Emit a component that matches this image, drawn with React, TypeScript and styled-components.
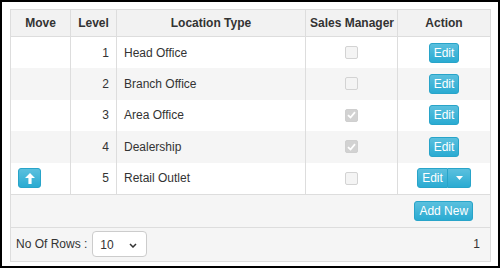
import React from "react"
import styled, { createGlobalStyle } from "styled-components"

type Row = { level: number; name: string; sales: boolean }

const rows: Row[] = [
  { level: 1, name: "Head Office", sales: false },
  { level: 2, name: "Branch Office", sales: false },
  { level: 3, name: "Area Office", sales: true },
  { level: 4, name: "Dealership", sales: true },
  { level: 5, name: "Retail Outlet", sales: false },
]

const GlobalStyle = createGlobalStyle`
  html, body {
    margin: 0;
    padding: 0;
    background: #fff;
  }
  body {
    font-family: "Liberation Sans", Arial, sans-serif;
    font-size: 12px;
    color: #333;
  }
`

export default function App() {
  return (
    <>
      <GlobalStyle />
      <S.Frame>
        <S.Table>
          <colgroup>
            <col style={{ width: 60 }} />
            <col style={{ width: 46 }} />
            <col style={{ width: 189 }} />
            <col style={{ width: 92 }} />
            <col />
          </colgroup>
          <thead>
            <tr>
              <S.Th>Move</S.Th>
              <S.Th>Level</S.Th>
              <S.Th>Location Type</S.Th>
              <S.Th>Sales Manager</S.Th>
              <S.Th>Action</S.Th>
            </tr>
          </thead>
          <tbody>
            {rows.map((r, i) => {
              const last = i === rows.length - 1
              return (
                <S.Tr key={r.level} striped={i % 2 === 1}>
                  <S.Td align="left">
                    {last && (
                      <S.IconButton>
                        <svg width="10" height="11" viewBox="0 0 10 11">
                          <path d="M5 0 L10 5 L6.6 5 L6.6 11 L3.4 11 L3.4 5 L0 5 Z" fill="#fff" />
                        </svg>
                      </S.IconButton>
                    )}
                  </S.Td>
                  <S.Td align="right">{r.level}</S.Td>
                  <S.Td align="left">{r.name}</S.Td>
                  <S.Td align="center">
                    <S.Check checked={r.sales}>
                      {r.sales && (
                        <svg width="9" height="8" viewBox="0 0 9 8">
                          <path d="M1 4.2 L3.5 6.5 L8 1.2" stroke="#fff" strokeWidth="1.8" fill="none" />
                        </svg>
                      )}
                    </S.Check>
                  </S.Td>
                  <S.Td align="center">
                    {last ? (
                      <S.Split>
                        <S.SplitMain>Edit</S.SplitMain>
                        <S.SplitCaret>
                          <svg width="7" height="4" viewBox="0 0 7 4">
                            <path d="M0 0 L7 0 L3.5 4 Z" fill="#fff" />
                          </svg>
                        </S.SplitCaret>
                      </S.Split>
                    ) : (
                      <S.Button>Edit</S.Button>
                    )}
                  </S.Td>
                </S.Tr>
              )
            })}
            <S.AddRow>
              <td colSpan={4} />
              <S.AddCell>
                <S.Button>Add New</S.Button>
              </S.AddCell>
            </S.AddRow>
          </tbody>
        </S.Table>
        <S.Footer>
          <S.RowsPicker>
            <span>No Of Rows :</span>
            <S.Select>
              <span>10</span>
              <svg width="8" height="5" viewBox="0 0 8 5">
                <path d="M1 1 L4 4 L7 1" stroke="#333" strokeWidth="1.5" fill="none" />
              </svg>
            </S.Select>
          </S.RowsPicker>
          <S.Page>1</S.Page>
        </S.Footer>
      </S.Frame>
    </>
  )
}

const btnBg = `
  background-image: linear-gradient(to bottom, #5bc0de 0%, #2aabd2 100%);
  border: 1px solid #28a4c9;
  color: #fff;
`

const S = {
  Frame: styled.div`
    width: 500px;
    height: 268px;
    box-sizing: border-box;
    border: 2px solid #000;
    padding: 7px 7px 0 8px;
    background: #fff;
  `,
  Table: styled.table`
    width: 100%;
    border-collapse: collapse;
    border: 1px solid #ddd;
    table-layout: fixed;
  `,
  Th: styled.th`
    height: 26px;
    padding: 0 4px;
    background: #f2f2f2;
    border: 1px solid #ddd;
    font-weight: 700;
    font-size: 12px;
    line-height: 1;
    text-align: center;
    white-space: nowrap;
  `,
  Tr: styled.tr<{ striped: boolean }>`
    height: 31.5px;
    background: ${({ striped }) => (striped ? "#f5f5f5" : "#fff")};
  `,
  Td: styled.td<{ align: "left" | "right" | "center" }>`
    padding: 0 7px;
    border-left: 1px solid #ddd;
    border-right: 1px solid #ddd;
    text-align: ${({ align }) => align};
    vertical-align: middle;
    font-size: 12px;
    line-height: 1;
  `,
  Button: styled.button`
    ${btnBg}
    height: 20px;
    padding: 0 4px;
    border-radius: 3px;
    font-family: "Liberation Sans", Arial, sans-serif;
    font-size: 12px;
    line-height: 18px;
    vertical-align: middle;
  `,
  IconButton: styled.button`
    ${btnBg}
    display: inline-flex;
    align-items: center;
    justify-content: center;
    width: 23px;
    height: 20px;
    padding: 0;
    border-radius: 3px;
    vertical-align: middle;
  `,
  Split: styled.div`
    display: inline-flex;
    vertical-align: middle;
  `,
  SplitMain: styled.button`
    ${btnBg}
    height: 20px;
    width: 31px;
    padding: 0;
    border-radius: 3px 0 0 3px;
    font-family: "Liberation Sans", Arial, sans-serif;
    font-size: 12px;
  `,
  SplitCaret: styled.button`
    ${btnBg}
    display: inline-flex;
    align-items: center;
    justify-content: center;
    height: 20px;
    width: 23px;
    padding: 0;
    border-left: none;
    border-radius: 0 3px 3px 0;
  `,
  Check: styled.span<{ checked: boolean }>`
    display: inline-flex;
    align-items: center;
    justify-content: center;
    box-sizing: border-box;
    width: 13px;
    height: 13px;
    border-radius: 2px;
    border: 1px solid ${({ checked }) => (checked ? "#cfcfcf" : "#d3d3d3")};
    background: ${({ checked }) => (checked ? "#d2d2d2" : "#f4f4f4")};
    vertical-align: middle;
  `,
  AddRow: styled.tr`
    height: 33px;
    background: #f5f5f5;
    border-top: 1px solid #ddd;
  `,
  AddCell: styled.td`
    text-align: center;
    vertical-align: middle;
  `,
  Footer: styled.div`
    display: flex;
    align-items: center;
    justify-content: space-between;
    height: 33px;
    padding: 0 10px 0 5px;
    background: #f5f5f5;
    border: 1px solid #ddd;
    border-top: none;
  `,
  RowsPicker: styled.div`
    display: flex;
    align-items: center;
    gap: 5px;
  `,
  Select: styled.div`
    display: flex;
    align-items: center;
    justify-content: space-between;
    box-sizing: border-box;
    width: 55px;
    height: 26px;
    padding: 2px 9px 0 7px;
    background: #fff;
    border: 1px solid #ccc;
    border-radius: 4px;
    font-size: 12px;
  `,
  Page: styled.span`
    font-size: 12px;
  `,
}
